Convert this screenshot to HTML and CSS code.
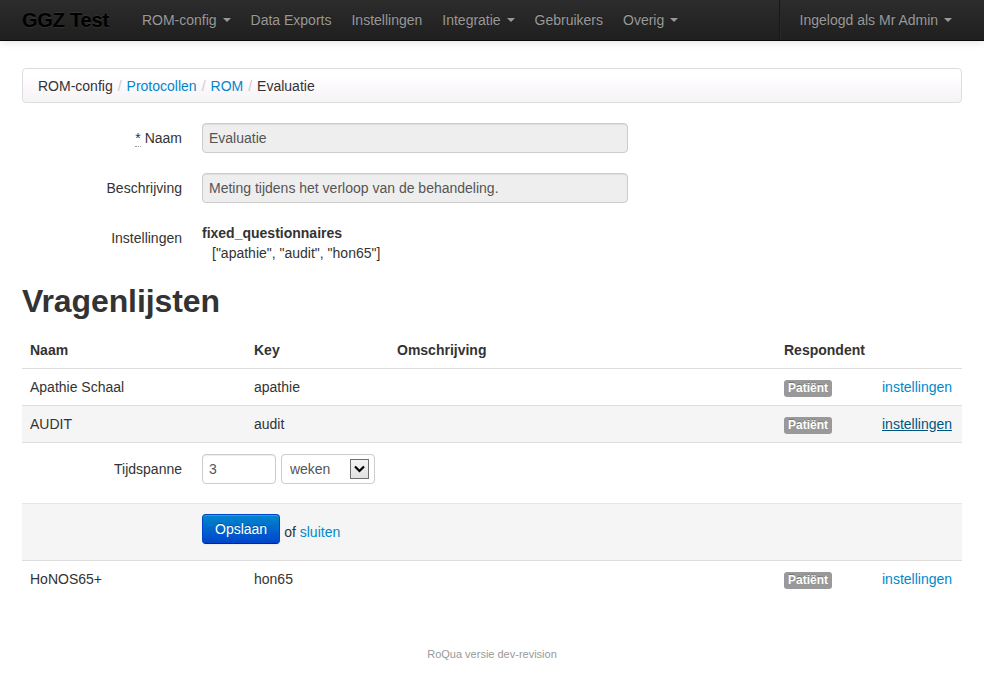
FILE: index.html
```html
<!DOCTYPE html>
<html lang="nl">
<head>
<meta charset="utf-8">
<title>GGZ Test</title>
<link rel="stylesheet" href="styles.css">
</head>
<body>
<header class="navbar">
  <div class="navbar-inner">
    <a class="brand" href="#">GGZ Test</a>
    <nav class="nav">
      <a href="#">ROM-config <span class="caret"></span></a>
      <a href="#">Data Exports</a>
      <a href="#">Instellingen</a>
      <a href="#">Integratie <span class="caret"></span></a>
      <a href="#">Gebruikers</a>
      <a href="#">Overig <span class="caret"></span></a>
    </nav>
    <div class="nav nav-right">
      <span class="divider-vertical"></span>
      <a href="#">Ingelogd als Mr Admin <span class="caret"></span></a>
    </div>
  </div>
</header>

<main class="container">
  <ul class="breadcrumb">
    <li>ROM-config</li><li class="sep">/</li>
    <li><a href="#">Protocollen</a></li><li class="sep">/</li>
    <li><a href="#">ROM</a></li><li class="sep">/</li>
    <li class="active">Evaluatie</li>
  </ul>

  <form class="form-horizontal">
    <div class="control-group">
      <label class="control-label"><abbr title="verplicht">*</abbr> Naam</label>
      <div class="controls"><input class="input-wide" type="text" value="Evaluatie" readonly></div>
    </div>
    <div class="control-group">
      <label class="control-label">Beschrijving</label>
      <div class="controls"><input class="input-wide" type="text" value="Meting tijdens het verloop van de behandeling." readonly></div>
    </div>
    <div class="control-group last">
      <label class="control-label">Instellingen</label>
      <div class="controls static">
        <dl class="settings">
          <dt>fixed_questionnaires</dt>
          <dd>["apathie", "audit", "hon65"]</dd>
        </dl>
      </div>
    </div>
  </form>

  <h1>Vragenlijsten</h1>

  <table class="table">
    <colgroup>
      <col class="c-naam"><col class="c-key"><col class="c-oms"><col class="c-resp"><col class="c-act">
    </colgroup>
    <thead>
      <tr><th>Naam</th><th>Key</th><th>Omschrijving</th><th>Respondent</th><th></th></tr>
    </thead>
    <tbody>
      <tr>
        <td>Apathie Schaal</td><td>apathie</td><td></td>
        <td><span class="label">Patiënt</span></td>
        <td class="act"><a href="#">instellingen</a></td>
      </tr>
      <tr class="hover">
        <td>AUDIT</td><td>audit</td><td></td>
        <td><span class="label">Patiënt</span></td>
        <td class="act"><a class="hovered" href="#">instellingen</a></td>
      </tr>
      <tr class="expand">
        <td colspan="5">
          <form class="form-horizontal inline-form">
            <div class="control-group tijd">
              <label class="control-label">Tijdspanne</label>
              <div class="controls">
                <input class="input-num" type="text" value="3">
                <span class="select-wrap">
                  <select class="select-unit"><option>weken</option><option>dagen</option><option>maanden</option></select>
                  <span class="select-arrow"><svg width="11" height="8" viewBox="0 0 11 8"><path d="M1 1.5 L5.5 6 L10 1.5" fill="none" stroke="#000" stroke-width="2.2"/></svg></span>
                </span>
              </div>
            </div>
            <div class="form-actions">
              <button type="button" class="btn btn-primary">Opslaan</button>
              <span class="or">of <a href="#">sluiten</a></span>
            </div>
          </form>
        </td>
      </tr>
      <tr>
        <td>HoNOS65+</td><td>hon65</td><td></td>
        <td><span class="label">Patiënt</span></td>
        <td class="act"><a href="#">instellingen</a></td>
      </tr>
    </tbody>
  </table>
</main>

<footer class="footer">RoQua versie dev-revision</footer>
</body>
</html>
```

FILE: styles.css
```css
* { box-sizing: border-box; }

html, body {
  margin: 0;
  padding: 0;
  background: #fff;
}

body {
  font-family: "Liberation Sans", Arial, Helvetica, sans-serif;
  font-size: 14px;
  line-height: 20px;
  color: #333;
}

a { color: #0088cc; text-decoration: none; }

/* Navbar */
.navbar {
  height: 41px;
  background: linear-gradient(to bottom, #2c2c2c, #1f1f1f);
  border-bottom: 1px solid #0a0a0a;
  box-shadow: 0 1px 8px rgba(0, 0, 0, 0.12);
}
.navbar-inner {
  width: 940px;
  margin: 0 auto;
  display: flex;
  align-items: center;
  height: 40px;
}
.brand {
  font-size: 20px;
  font-weight: bold;
  color: #000;
  text-shadow: 0 1px 0 rgba(255, 255, 255, 0.08), 0 -1px 0 rgba(255, 255, 255, 0.06);
  padding: 10px 0;
  margin-right: 23px;
  line-height: 20px;
  letter-spacing: -0.2px;
}
.nav {
  display: flex;
  align-items: center;
  height: 40px;
}
.nav a {
  color: #999;
  padding: 10px 10px;
  line-height: 20px;
  text-shadow: 0 -1px 0 rgba(0, 0, 0, 0.25);
  white-space: nowrap;
}
.nav-right { margin-left: auto; }
.nav-right a { padding-right: 10px; }
.caret {
  display: inline-block;
  width: 0;
  height: 0;
  vertical-align: middle;
  margin-left: 2px;
  margin-top: -2px;
  border-top: 4px solid #999;
  border-left: 4px solid transparent;
  border-right: 4px solid transparent;
}
.divider-vertical {
  display: block;
  height: 40px;
  margin: 0 9px;
  border-left: 1px solid #171717;
  border-right: 1px solid #2a2a2a;
}

/* Container */
.container {
  width: 940px;
  margin: 27px auto 0;
}

.breadcrumb {
  list-style: none;
  margin: 0;
  padding: 7px 15px 6px;
  display: flex;
  border: 1px solid #ddd;
  border-radius: 4px;
  background: linear-gradient(to bottom, #ffffff 0%, #ffffff 25%, #fdf9fd 50%, #f5f5f5 100%);
}
.breadcrumb li { color: #333; }
.breadcrumb .sep { color: #ccc; padding: 0 5px; }

/* Forms */
.form-horizontal { margin: 20px 0 0; }
.control-group {
  display: grid;
  grid-template-columns: 160px 1fr;
  column-gap: 20px;
  margin-bottom: 20px;
}
.control-group.last { margin-bottom: 0; }
.control-label {
  text-align: right;
  padding-top: 5px;
  color: #333;
}
.control-label abbr {
  text-decoration: none;
  border-bottom: 1px dotted #999;
  cursor: help;
}
input, select, button {
  font-family: "Liberation Sans", Arial, Helvetica, sans-serif;
  font-size: 14px;
}
.input-wide {
  width: 426px;
  height: 30px;
  padding: 4px 6px;
  line-height: 20px;
  color: #555;
  background: #eeeeee;
  border: 1px solid #ccc;
  border-radius: 4px;
  box-shadow: inset 0 1px 1px rgba(0, 0, 0, 0.075);
}
.static { padding-top: 0; }
.settings { margin: 0; }
.settings dt { font-weight: bold; }
.settings dd { margin: 0 0 0 10px; }

h1 {
  font-size: 32px;
  line-height: 40px;
  font-weight: bold;
  margin: 18px 0 11px;
  color: #333;
  letter-spacing: -0.1px;
}

/* Table */
.table {
  width: 100%;
  border-collapse: collapse;
  table-layout: fixed;
  margin: 0;
}
.c-naam { width: 224px; }
.c-key { width: 143px; }
.c-oms { width: 387px; }
.c-resp { width: 98px; }
.c-act { width: 88px; }
.table th, .table td {
  padding: 8px;
  line-height: 20px;
  text-align: left;
  vertical-align: top;
}
.table th { font-weight: bold; }
.table thead tr { border-bottom: 1px solid #ddd; }
.table tbody tr { border-top: 1px solid #ddd; }
.table tbody tr:first-child { border-top: 0; }
.table tr.hover td { background: #f5f5f5; }
.table td.act { text-align: right; padding-right: 10px; }
.table a.hovered { color: #005580; text-decoration: underline; }

.label {
  display: inline-block;
  padding: 2px 4px;
  font-size: 12px;
  font-weight: bold;
  line-height: 13px;
  color: #fff;
  background: #999;
  border-radius: 3px;
  text-shadow: 0 -1px 0 rgba(0, 0, 0, 0.25);
  vertical-align: baseline;
}

.table tr.expand td { padding: 0; }
.inline-form { margin: 0; }
.control-group.tijd {
  padding-top: 11px;
  margin-bottom: 19px;
}
.input-num {
  width: 74px;
  height: 30px;
  padding: 4px 6px;
  color: #555;
  background: #fff;
  border: 1px solid #ccc;
  border-radius: 4px;
  box-shadow: inset 0 1px 1px rgba(0, 0, 0, 0.075);
  vertical-align: top;
}
.select-wrap {
  position: relative;
  display: inline-block;
  margin-left: 1px;
  vertical-align: top;
}
.select-unit {
  -webkit-appearance: none;
  appearance: none;
  width: 94px;
  height: 30px;
  padding: 4px 8px;
  color: #555;
  background: #fff;
  border: 1px solid #ccc;
  border-radius: 4px;
}
.select-arrow {
  position: absolute;
  right: 6px;
  top: 5px;
  width: 19px;
  height: 20px;
  border: 1px solid #6f6f6f;
  background: linear-gradient(to bottom, #f4f4f4, #e2e2e2);
  display: flex;
  align-items: center;
  justify-content: center;
  pointer-events: none;
}

.form-actions {
  background: #f5f5f5;
  border-top: 1px solid #e5e5e5;
  padding: 10px 0 16px 180px;
  display: flex;
  align-items: center;
}
.btn {
  display: inline-block;
  height: 30px;
  padding: 4px 12px;
  line-height: 20px;
  border-radius: 4px;
  cursor: pointer;
}
.btn-primary {
  color: #fff;
  text-shadow: 0 -1px 0 rgba(0, 0, 0, 0.25);
  background: linear-gradient(to bottom, #0088cc, #0044cc);
  border: 1px solid #0044cc;
  border-bottom-color: #002a80;
  box-shadow: inset 0 1px 0 rgba(255, 255, 255, 0.2), 0 1px 2px rgba(0, 0, 0, 0.05);
}
.or {
  margin-left: 4px;
  padding-top: 5px;
}

.footer {
  margin-top: 47px;
  text-align: center;
  font-size: 11px;
  line-height: 20px;
  color: #999;
}
```
